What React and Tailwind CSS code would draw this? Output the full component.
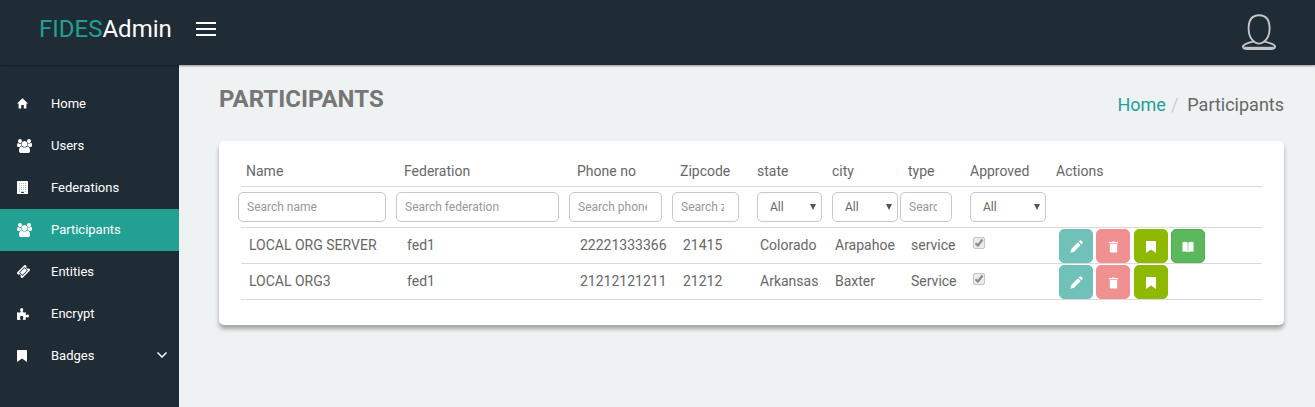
import React, { useState } from "react";

function HomeIcon() {
  return (
    <svg viewBox="0 0 11 11" className="size-[11px]" fill="currentColor" aria-hidden="true">
      <path d="M5.5 .3L11 5.4H9.4V10.5H6.8V7H4.2V10.5H1.6V5.4H0Z" />
    </svg>
  );
}

function UsersIcon() {
  return (
    <svg viewBox="64 0 1920 1792" className="h-[14px] w-[15px]" fill="currentColor" aria-hidden="true">
      <path d="M657 896q-162 5-265 128h-134q-82 0-138-40.5t-56-118.5q0-353 124-353 6 0 43.5 21t97.5 42.5 119 21.5q67 0 133-23-5 37-5 66 0 159 90 287zm1071 637q0 120-73 189.5t-194 69.5h-874q-121 0-194-69.5t-73-189.5q0-53 3.5-103.5t14-109 26.5-108.5 43-97.5 62-81 85.5-53.5 111.5-20q10 0 43 21.5t73 48 107 48 135 21.5 135-21.5 107-48 73-48 43-21.5q61 0 111.5 20t85.5 53.5 62 81 43 97.5 26.5 108.5 14 109 3.5 103.5zm-1024-1277q0 106-75 181t-181 75-181-75-75-181 75-181 181-75 181 75 75 181zm704 384q0 159-112.5 271.5t-271.5 112.5-271.5-112.5-112.5-271.5 112.5-271.5 271.5-112.5 271.5 112.5 112.5 271.5zm576 225q0 78-56 118.5t-138 40.5h-134q-103-123-265-128 90-128 90-287 0-29-5-66 66 23 133 23 59 0 119-21.5t97.5-42.5 43.5-21q124 0 124 353zm-128-609q0 106-75 181t-181 75-181-75-75-181 75-181 181-75 181 75 75 181z" />
    </svg>
  );
}

function BuildingIcon() {
  const dots = [];
  for (let y = 2; y < 11; y += 2) {
    for (let x = 2; x < 10; x += 2) {
      if (!(y === 10 && (x === 4 || x === 6))) dots.push([x, y]);
    }
  }
  return (
    <svg viewBox="0 0 11 13" className="h-[13px] w-[11px]" aria-hidden="true">
      <rect width="11" height="13" rx="0.5" fill="#fff" />
      {dots.map(([x, y]) => (
        <rect key={`${x}-${y}`} x={x + 0.1} y={y} width="0.9" height="0.9" fill="#1f2c37" opacity="0.4" />
      ))}
      <rect x="4.2" y="10.8" width="2.6" height="1.2" fill="#1f2c37" />
    </svg>
  );
}

function TicketIcon() {
  return (
    <svg viewBox="53 53 1686 1686" className="size-[13px]" fill="currentColor" aria-hidden="true">
      <path d="M1024 452l316 316-572 572-316-316zm-211 979l618-618q19-19 19-45t-19-45l-362-362q-18-18-45-18t-45 18l-618 618q-19 19-19 45t19 45l362 362q18 18 45 18t45-18zm889-637l-907 908q-37 37-90.5 37t-90.5-37l-126-126q56-56 56-136t-56-136-136-56-136 56l-125-126q-37-37-37-90.5t37-90.5l907-906q37-37 90.5-37t90.5 37l125 125q-56 56-56 136t56 136 136 56 136-56l126 125q37 37 37 90.5t-37 90.5z" />
    </svg>
  );
}

function PuzzleIcon() {
  return (
    <svg viewBox="0 0 12 12" className="size-3" fill="currentColor" aria-hidden="true">
      <path d="M0 4.2C1.3 4.5 3 4.6 3.6 4.2C4.1 3.8 3.1 2.9 3.1 1.8C3.1.7 3.8 0 4.7 0S6.3.7 6.3 1.8C6.3 2.8 5.4 3.6 5.7 4.1C6.2 4.6 7.7 4.4 9 4.2C8.8 5.4 8.6 6.8 9 7.1C9.4 7.4 9.9 6.5 10.8 6.5C11.5 6.5 12 7.2 12 8.1S11.5 9.6 10.7 9.6C9.9 9.6 9.4 8.8 9 9.1C8.6 9.5 8.7 10.6 9 11.6C7.8 11.9 6.4 12.1 5.9 11.6C5.4 11.1 6.4 10.3 6.4 9.4C6.4 8.5 5.6 8 4.7 8S3 8.5 3 9.4C3 10.4 4 11.1 3.6 11.6C3 12.2 1.3 12 0 11.7Z" />
    </svg>
  );
}

function AvatarIcon() {
  return (
    <svg viewBox="0 0 34 36" className="h-9 w-[34px]" fill="none" stroke="#c3c5c7" strokeWidth="1.9" aria-hidden="true">
      <path d="M12.4 28C8.5 25.2 6.6 20.5 6.6 14.6C6.6 5.8 10.4 1.2 17 1.2S27.6 5.8 27.6 14.6C27.6 20.5 25.6 25.2 21.7 28C19 29.9 15 29.9 12.4 28Z" />
      <path d="M12.4 27.4C7 28.5 2.5 29.7 .9 32.3C1.2 34.2 3 35 5 35H29C31 35 32.8 34.2 33.1 32.3C31.4 29.7 27 28.5 21.6 27.4" />
      <path d="M2.5 33.8H31.5" strokeWidth="2" />
    </svg>
  );
}

function PencilIcon() {
  return (
    <svg viewBox="0 0 13 13" className="size-[13px]" fill="currentColor" aria-hidden="true">
      <path d="M.3 12.7L1.3 8.9L7.9 2.3L10.7 5.1L4.1 11.7Z" />
      <path d="M8.7 1.6L9.8 .6Q10.6 0 11.4 .7L12.3 1.6Q13 2.4 12.4 3.2L11.4 4.3Z" />
    </svg>
  );
}

function TrashIcon() {
  return (
    <svg viewBox="0 0 9 12" className="h-3 w-[9px]" fill="currentColor" aria-hidden="true">
      <path d="M0 1H2.8L3.4 .4H5.6L6.2 1H9V2.2H0Z" />
      <path d="M.8 3H8.2V10.4Q8.2 11.5 7.1 11.5H1.9Q.8 11.5 .8 10.4Z" />
    </svg>
  );
}

function BookmarkIcon() {
  return (
    <svg viewBox="0 0 10 12" className="h-3 w-2.5" fill="currentColor" aria-hidden="true">
      <path d="M0 .6Q0 0 .6 0H9.4Q10 0 10 .6V12L5 8.4L0 12Z" />
    </svg>
  );
}

function BookIcon() {
  return (
    <svg viewBox="0 0 12 12" className="size-3" fill="currentColor" aria-hidden="true">
      <path d="M.5 1.2C2.3.4 4.2.5 5.7 1.5V11.2C4.2 10.4 2.3 10.3.5 11Z" />
      <path d="M6.3 1.5C7.8.5 9.7.4 11.5 1.2V11C9.7 10.3 7.8 10.4 6.3 11.2Z" />
    </svg>
  );
}

const nav = [
  { label: "Home", icon: <HomeIcon /> },
  { label: "Users", icon: <UsersIcon /> },
  { label: "Federations", icon: <BuildingIcon /> },
  { label: "Participants", icon: <UsersIcon />, active: true },
  { label: "Entities", icon: <TicketIcon /> },
  { label: "Encrypt", icon: <PuzzleIcon /> },
  { label: "Badges", icon: <BookmarkIcon />, expandable: true },
];

const columns = [
  { label: "Name", width: "w-[158px]", search: "Search name" },
  { label: "Federation", width: "w-[173px]", search: "Search federation" },
  { label: "Phone no", width: "w-[103px]", search: "Search phone" },
  { label: "Zipcode", width: "w-[77px]", search: "Search zipcode" },
  { label: "state", width: "w-[75px]", select: true },
  { label: "city", width: "w-[76px]", select: true },
  { label: "type", width: "w-[62px]", search: "Search type" },
  { label: "Approved", width: "w-[86px]", select: true },
  { label: "Actions", width: "w-auto" },
];

const rows = [
  { cells: ["LOCAL ORG SERVER", "fed1", "22221333366", "21415", "Colorado", "Arapahoe", "service"], book: true },
  { cells: ["LOCAL ORG3", "fed1", "21212121211", "21212", "Arkansas", "Baxter", "Service"], book: false },
];

function Filter({ column }) {
  if (column.search) {
    return (
      <input
        type="text"
        aria-label={column.search}
        placeholder={column.search}
        className="-ml-[3px] block h-[30px] w-[calc(100%-10px)] rounded-[5px] border border-[#c8c8c8] bg-white pr-3.5 pl-2 text-xs text-[#676a6c] placeholder:text-[#999]"
      />
    );
  }
  if (column.select) {
    return (
      <div className="relative ml-[5px] w-[calc(100%-5px)]">
        <select
          aria-label={`Filter by ${column.label}`}
          className="block h-[30px] w-full appearance-none rounded-[5px] border border-[#c8c8c8] bg-white pl-3 text-xs text-[#676767]"
        >
          <option>All</option>
        </select>
        <svg viewBox="0 0 6 6" className="pointer-events-none absolute top-3 right-1.5 size-1.5" fill="#555" aria-hidden="true">
          <path d="M0 0H6L3 6Z" />
        </svg>
      </div>
    );
  }
  return null;
}

function Approved({ name }) {
  return (
    <span className="relative block size-3">
      <input
        type="checkbox"
        checked
        disabled
        readOnly
        aria-label={`${name} approved`}
        className="block size-3 appearance-none rounded-[2px] border border-[#c6c6c6] bg-[#ebebeb]"
      />
      <svg viewBox="0 0 12 12" className="pointer-events-none absolute inset-0 size-3" fill="none" stroke="#8c8c8c" strokeWidth="2.2" aria-hidden="true">
        <path d="M2.5 6.2L4.9 8.5L9.5 2.5" />
      </svg>
    </span>
  );
}

function Action({ label, tone, children }) {
  return (
    <button type="button" aria-label={label} className={`inline-flex size-[34px] items-center justify-center rounded-[5px] border pt-0.5 align-top text-white ${tone}`}>
      {children}
    </button>
  );
}

export default function App() {
  const [open, setOpen] = useState(true);
  return (
    <div className="flex min-h-screen flex-col bg-[#eef2f3] font-['Roboto',sans-serif] text-[#676767]">
      <header className="relative flex h-[65px] items-center justify-between bg-[#1f2c36] px-[39px] shadow-[0_1px_2px_rgba(0,0,0,0.4)]">
        <div className="flex items-center gap-6 pb-2">
          <a href="#home" className="text-2xl leading-8 text-white">
            <span className="text-[#22a093]">FIDES</span>Admin
          </a>
          <button type="button" aria-label="Toggle menu" aria-expanded={open} onClick={() => setOpen(!open)} className="flex flex-col gap-1">
            <span className="h-0.5 w-5 bg-white" />
            <span className="h-0.5 w-5 bg-white" />
            <span className="h-0.5 w-5 bg-white" />
          </button>
        </div>
        <button type="button" aria-label="Account" className="pb-0.5">
          <AvatarIcon />
        </button>
      </header>

      <div className="flex grow">
        {open && (
          <nav className="w-[179px] shrink-0 bg-[#1f2c36] pt-[18px]">
            {nav.map((item) => (
              <a
                key={item.label}
                href={`#${item.label.toLowerCase()}`}
                aria-current={item.active ? "page" : undefined}
                className={`flex h-[42px] items-center pr-3 pl-[17px] text-[13px] text-white ${item.active ? "bg-[#22a093]" : ""}`}
              >
                <span className="flex w-[34px] items-center pb-px">{item.icon}</span>
                <span className="grow">{item.label}</span>
                {item.expandable && (
                  <svg viewBox="0 0 10 6" className="mb-0.5 h-1.5 w-2.5" fill="none" stroke="currentColor" strokeWidth="1.5" aria-hidden="true">
                    <path d="M.5 .5L5 5L9.5 .5" />
                  </svg>
                )}
              </a>
            ))}
          </nav>
        )}

        <main className="min-w-0 grow pt-[18px] pr-[31px] pl-10">
          <div className="flex items-start justify-between">
            <h1 className="text-2xl leading-8 font-bold text-[#767676]">PARTICIPANTS</h1>
            <nav aria-label="Breadcrumb" className="flex pt-2 text-lg leading-7">
              <a href="#home" className="text-[#22a093]">Home</a>
              <span className="px-[5px] text-[#ccc]">/</span>
              <span className="pl-1">Participants</span>
            </nav>
          </div>

          <section className="mt-[22px] rounded-[5px] bg-white px-[22px] pt-[15px] pb-[25px] shadow-[0_4px_4px_rgba(0,0,0,0.32)]">
            <table className="w-full table-fixed border-collapse text-left text-sm">
              <thead>
                <tr className="h-[30px] border-b border-[#dadada]">
                  {columns.map((c) => (
                    <th key={c.label} scope="col" className={`${c.width} pt-px pl-[5px] font-normal`}>{c.label}</th>
                  ))}
                </tr>
                <tr className="h-[41px] border-b border-[#dadada]">
                  {columns.map((c) => (
                    <td key={c.label} className={c.select ? "pr-[5px]" : ""}>
                      <Filter column={c} />
                    </td>
                  ))}
                </tr>
              </thead>
              <tbody>
                {rows.map((row) => (
                  <tr key={row.cells[0]} className="h-9 border-b border-[#dadada]">
                    {row.cells.map((cell, i) => (
                      <td key={i} className="pl-2 whitespace-nowrap">{cell}</td>
                    ))}
                    <td className="pb-1 pl-2">
                      <Approved name={row.cells[0]} />
                    </td>
                    <td className="pt-px pl-2">
                      <Action label="Edit" tone="border-[#70c1b9] bg-[#70c1b9]"><PencilIcon /></Action>{" "}
                      <Action label="Delete" tone="border-[#f09090] bg-[#f09090]"><TrashIcon /></Action>{" "}
                      <Action label="Bookmark" tone="border-[#8fb900] bg-[#8fb900]"><BookmarkIcon /></Action>{" "}
                      {row.book && <Action label="Details" tone="border-[#4cae4c] bg-[#5cb85c]"><BookIcon /></Action>}
                    </td>
                  </tr>
                ))}
              </tbody>
            </table>
          </section>
        </main>
      </div>
    </div>
  );
}
